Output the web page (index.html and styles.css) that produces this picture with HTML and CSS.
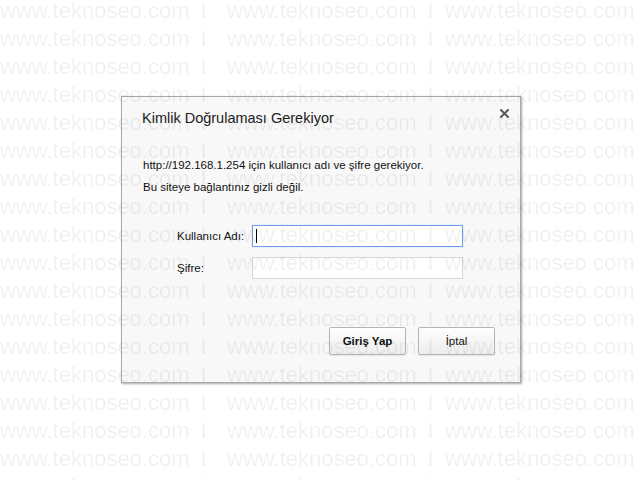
FILE: index.html
```html
<!DOCTYPE html>
<html lang="tr">
<head>
    <meta charset="UTF-8">
    <meta name="viewport" content="width=device-width, initial-scale=1.0">
    <title>Kimlik Doğrulaması Gerekiyor</title>
    <link rel="stylesheet" href="styles.css">
</head>
<body>
    <div class="auth-dialog">
        <div class="dialog-head">
            <h1 class="dialog-title">Kimlik Doğrulaması Gerekiyor</h1>
            <button class="close-btn" type="button" aria-label="Kapat">
                <svg width="9" height="9" viewBox="0 0 9 9">
                    <path d="M1 1 L8 8 M8 1 L1 8" stroke="#5a5a5a" stroke-width="2" stroke-linecap="square"/>
                </svg>
            </button>
        </div>
        <div class="dialog-message">
            <p>http://192.168.1.254 için kullanıcı adı ve şifre gerekiyor.</p>
            <p>Bu siteye bağlantınız gizli değil.</p>
        </div>
        <form class="login-form" id="loginForm">
            <label for="user">Kullanıcı Adı:</label>
            <div class="field focused">
                <span class="caret"></span>
                <input type="text" id="user">
            </div>
            <label for="pass">Şifre:</label>
            <div class="field">
                <input type="password" id="pass">
            </div>
            <div class="form-actions">
                <button type="submit" class="btn btn-primary">Giriş Yap</button>
                <button type="button" class="btn">İptal</button>
            </div>
        </form>
    </div>

    <div class="watermark"></div>

    <script>
        const watermark = document.querySelector('.watermark');

        for (let i = 0; i < 18; i++) {
            const row = document.createElement('div');
            row.className = 'wm-row';
            for (let j = 0; j < 3; j++) {
                const cell = document.createElement('span');
                cell.className = 'wm-cell';
                cell.innerHTML = 'www.teknoseo.com<span class="wm-bar">I</span>';
                row.appendChild(cell);
            }
            watermark.appendChild(row);
        }

        document.getElementById('loginForm').addEventListener('submit', function(e) {
            e.preventDefault();
        });
    </script>
</body>
</html>
```

FILE: styles.css
```css
* {
    margin: 0;
    padding: 0;
    box-sizing: border-box;
}

body {
    width: 640px;
    height: 480px;
    overflow: hidden;
    background: #fff;
    font-family: "Liberation Sans", Arial, sans-serif;
    color: #000;
    position: relative;
    padding: 96px 0 0 121px;
}

.auth-dialog {
    width: 400px;
    height: 287px;
    background: #f8f8f8;
    border: 1px solid #a9a9a9;
    box-shadow: 1px 1px 2px rgba(0, 0, 0, 0.35);
    display: flex;
    flex-direction: column;
}

.dialog-head {
    height: 42px;
    display: flex;
    justify-content: space-between;
    align-items: flex-start;
    padding: 12px 11px 0 20px;
}

.dialog-title {
    font-size: 14.5px;
    font-weight: normal;
    line-height: 18px;
    color: #222;
}

.close-btn {
    border: none;
    background: none;
    width: 9px;
    height: 9px;
    margin-top: 0;
    display: flex;
    cursor: pointer;
}

.dialog-message {
    padding: 15px 0 0 21px;
    font-size: 11.5px;
    line-height: 22px;
    color: #111;
}

.login-form {
    display: grid;
    grid-template-columns: 75px 211px;
    row-gap: 10px;
    align-items: center;
    padding: 27px 0 0 55px;
}

.login-form label {
    font-size: 11.5px;
    color: #111;
}

.field {
    position: relative;
    height: 22px;
    background: #fff;
    border: 1px solid #d6d6d6;
}

.field.focused {
    border-color: #6f9ef0;
    box-shadow: 0 0 1px #a9c6f7;
}

.field input {
    width: 100%;
    height: 100%;
    border: none;
    outline: none;
    background: transparent;
}

.caret {
    position: absolute;
    left: 3px;
    top: 3px;
    width: 1px;
    height: 14px;
    background: #000;
}

.form-actions {
    grid-column: 1 / -1;
    display: flex;
    justify-content: flex-end;
    gap: 12px;
    margin: 38px -32px 0 0;
}

.btn {
    width: 77px;
    height: 28px;
    font-family: "Liberation Sans", Arial, sans-serif;
    font-size: 11.5px;
    color: #111;
    border: 1px solid #b4b4b4;
    border-radius: 2px;
    background: linear-gradient(#fefefe, #ededed);
    box-shadow: 0 1px 1px rgba(0, 0, 0, 0.08);
    cursor: pointer;
}

.btn-primary {
    font-weight: bold;
}

/* Site stamp repeated over the whole screen */
.watermark {
    position: absolute;
    top: -3px;
    left: 0;
    width: 640px;
    height: 490px;
    overflow: hidden;
    pointer-events: none;
    z-index: 10;
}

.wm-row {
    display: grid;
    grid-template-columns: 227px 218px auto;
    height: 28px;
    line-height: 28px;
    white-space: nowrap;
}

.wm-cell {
    font-family: "Liberation Sans", Arial, sans-serif;
    font-size: 22px;
    color: rgba(0, 0, 0, 0.065);
}

.wm-bar {
    margin-left: 11px;
}
```
